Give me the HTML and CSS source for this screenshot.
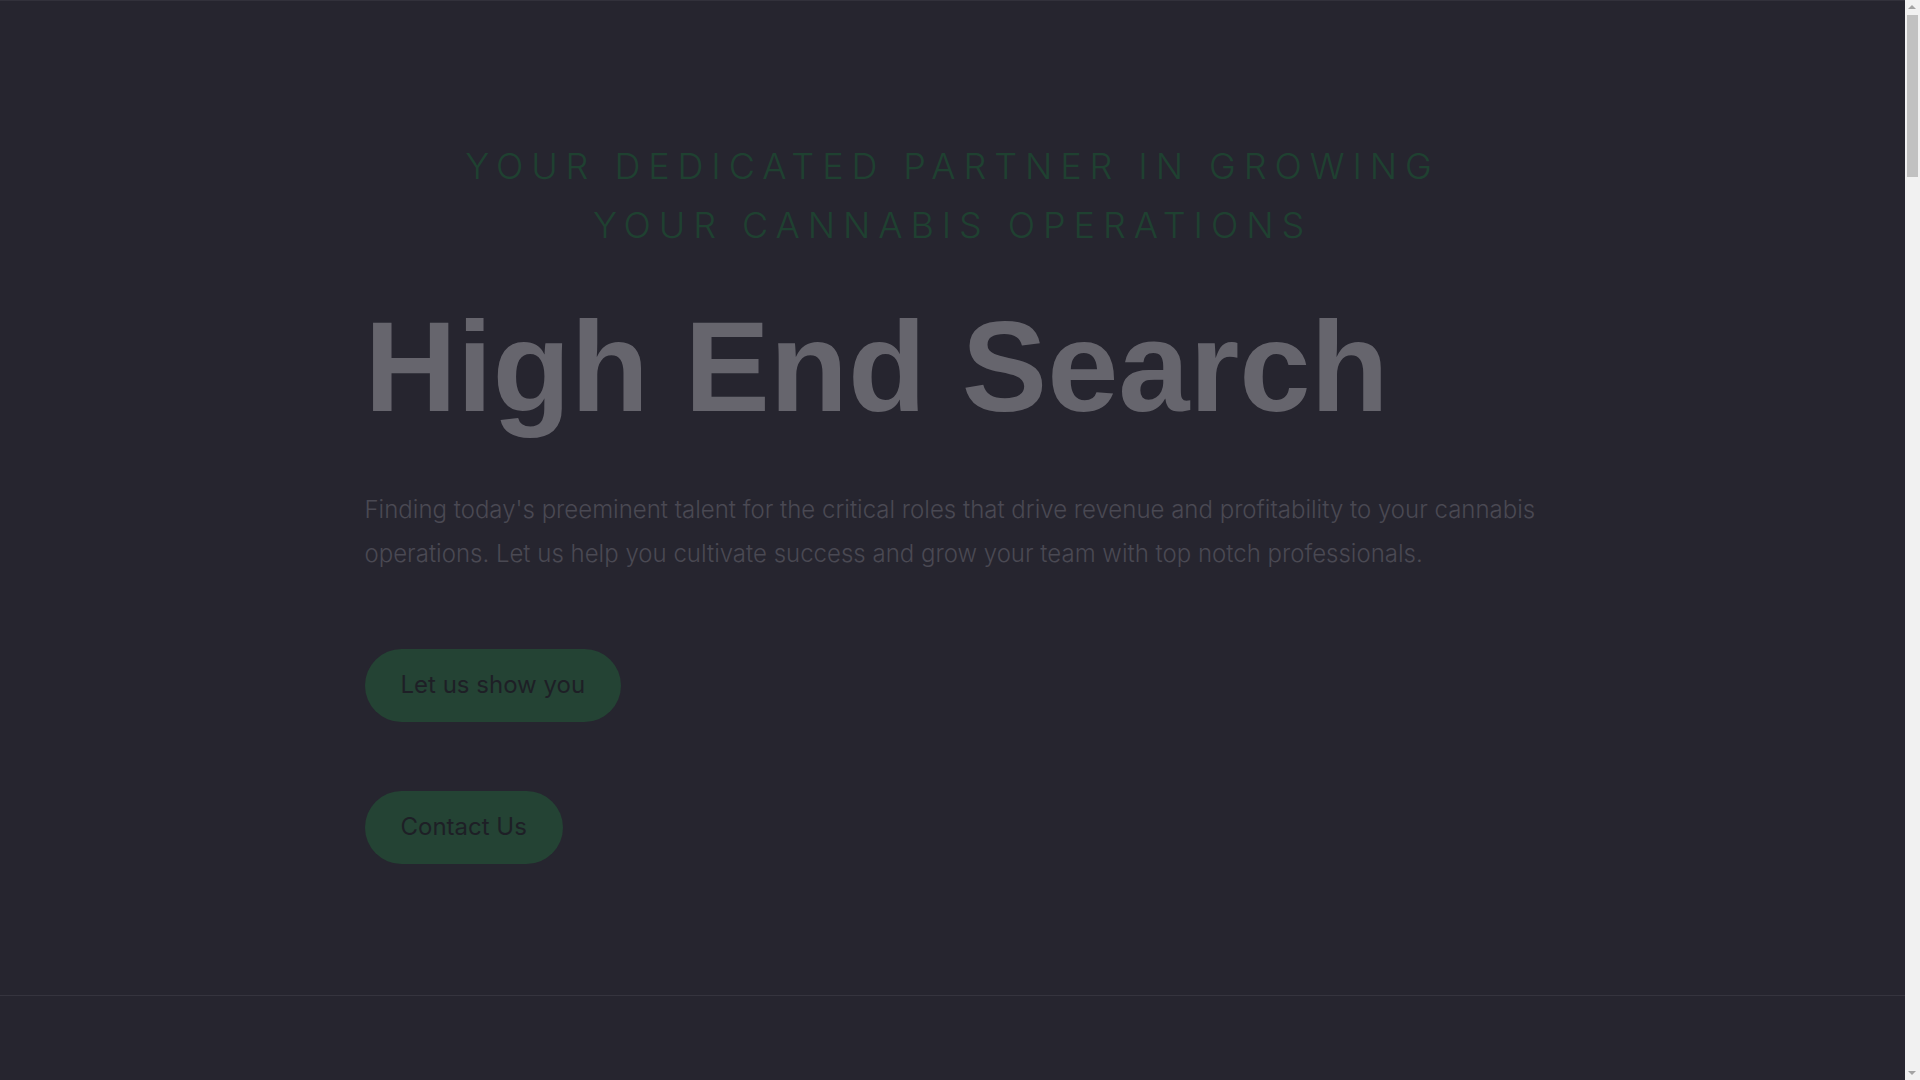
FILE: index.html
```html
<!DOCTYPE html>
<html lang="en">
<head>
<meta charset="utf-8">
<title>High End Search</title>
<link rel="stylesheet" href="styles.css">
</head>
<body>
<main class="page">
  <section class="hero">
    <div class="container">
      <p class="tagline">Your dedicated partner in growing your cannabis operations</p>
      <h1 class="title">High End Search</h1>
      <p class="lead">Finding today's preeminent talent for the critical roles that drive revenue and profitability to your cannabis operations. Let us help you cultivate success and grow your team with top notch professionals.</p>
      <div class="actions">
        <a class="btn" href="#">Let us show you</a>
        <a class="btn" href="#">Contact Us</a>
      </div>
    </div>
  </section>
  <section class="next"></section>
</main>
<div class="scrollbar" aria-hidden="true">
  <span class="sb-up"></span>
  <span class="sb-thumb"></span>
  <span class="sb-down"></span>
</div>
</body>
</html>
```

FILE: styles.css
```css
html, body {
  margin: 0;
  padding: 0;
  background: #26252f;
}
body {
  font-family: Inter, "Noto Sans", sans-serif;
}
.page {
  margin-right: 15px;
  border-top: 1px solid #32313b;
}
.hero {
  padding: 136px 0 131px;
  border-bottom: 1px solid #35343e;
}
.container {
  max-width: 1176px;
  margin: 0 auto;
  padding: 0 12px;
}
.tagline {
  margin: 0 auto;
  max-width: 1020px;
  text-align: center;
  text-transform: uppercase;
  font-size: 36px;
  line-height: 59.4px;
  letter-spacing: 0.22em;
  color: #1f4131;
  font-weight: 300;
}
.title {
  margin: 34px 0 0;
  font-family: "Liberation Sans", Arial, sans-serif;
  font-weight: 700;
  font-size: 128px;
  line-height: 1.2;
  color: #66656d;
}
.lead {
  margin: 45px 0 0;
  font-size: 24px;
  font-weight: 300;
  line-height: 1.8;
  color: #4a4953;
}
.actions {
  margin-top: 74px;
  display: flex;
  flex-direction: column;
  align-items: flex-start;
  gap: 69px;
}
.btn {
  display: inline-block;
  padding: 18px 36px 19px;
  font-size: 24px;
  line-height: 36px;
  color: #1e1f26;
  background: #244334;
  border-radius: 40px;
  text-decoration: none;
}
.next {
  height: 300px;
}
.scrollbar {
  position: fixed;
  top: 0;
  right: 0;
  width: 15px;
  height: 100vh;
  background: #f1f1f1;
}
.sb-thumb {
  position: absolute;
  top: 15px;
  left: 2px;
  right: 2px;
  height: 162px;
  background: #c1c1c1;
}
.sb-up, .sb-down {
  position: absolute;
  left: 3px;
  width: 0;
  height: 0;
  border-left: 4px solid transparent;
  border-right: 4px solid transparent;
}
.sb-up {
  top: 5px;
  border-bottom: 4px solid #a3a3a3;
}
.sb-down {
  bottom: 5px;
  border-top: 4px solid #a3a3a3;
}
```
